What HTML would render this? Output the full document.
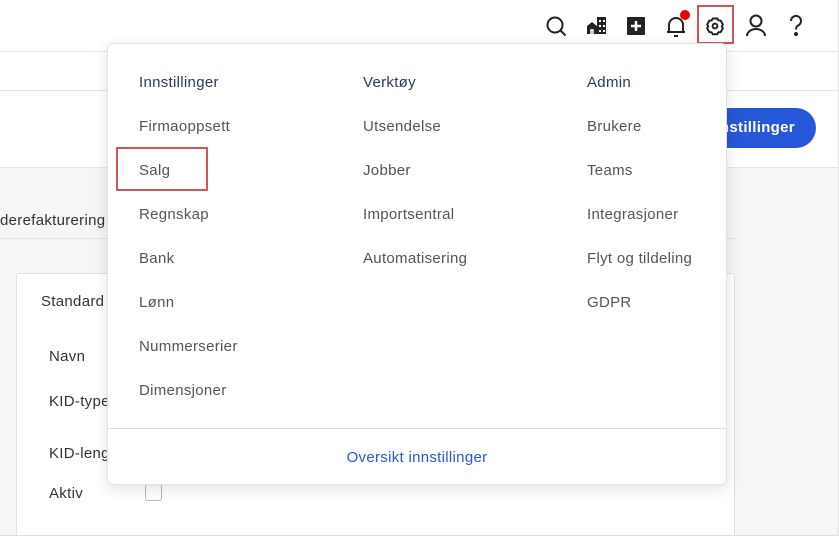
<!DOCTYPE html>
<html style="width:839px;height:536px;overflow:hidden"><head><meta charset="utf-8"><style>
*{box-sizing:border-box;margin:0;padding:0}
body{width:839px;height:536px;overflow:hidden;font-family:"Liberation Sans",sans-serif;background:#fff;position:relative;letter-spacing:0.3px}
.abs{position:absolute}
.gray{left:0;top:167px;width:839px;height:369px;background:#f5f6f7;border-top:1px solid #e3e3e3}
.txt{color:#333;font-size:15px}
.dd{left:107px;top:43px;width:620px;height:442px;background:#fff;border:1px solid #e2e2e2;border-radius:6px;box-shadow:0 4px 14px rgba(0,0,0,.12)}
.h{color:#253a6a;font-size:15px;position:absolute}
.it{color:#555;font-size:15px;position:absolute}
</style></head><body>
<div class="abs" style="left:0;top:51px;width:839px;height:1px;background:#e3e3e3"></div>
<div class="abs" style="left:0;top:90px;width:839px;height:1px;background:#e3e3e3"></div>
<div class="abs gray"></div>
<div class="abs" style="left:838px;top:0;width:1px;height:536px;background:#ddd"></div>
<div class="abs" style="left:0;top:535px;width:839px;height:1px;background:#ddd"></div>
<div class="abs" style="left:0;top:238px;width:735px;height:1px;background:#e0e0e0"></div>
<div class="abs txt" style="left:0;top:212px">derefakturering</div>
<div class="abs" style="left:16px;top:273px;width:719px;height:262px;background:#fff;border:1px solid #e0e0e0;border-bottom:none;border-radius:3px 3px 0 0"></div>
<div class="abs txt" style="left:41px;top:293px">Standard</div>
<div class="abs txt" style="left:49px;top:348px">Navn</div>
<div class="abs txt" style="left:49px;top:393px">KID-type</div>
<div class="abs txt" style="left:49px;top:445px">KID-lengde</div>
<div class="abs txt" style="left:49px;top:485px">Aktiv</div>
<div class="abs" style="left:145px;top:484px;width:17px;height:17px;border:1px solid #bbb;border-radius:3px;background:#fff"></div>
<div class="abs" style="left:690px;top:108px;width:126px;height:40px;background:#2657d8;border-radius:20px;color:#fff;font-weight:bold;font-size:15px;line-height:40px;padding-left:16px">Innstillinger</div>
<svg class="abs" style="left:540px;top:10px" width="290" height="34" viewBox="540 10 290 34" fill="none" stroke="#222" stroke-width="2">
<circle cx="555" cy="25" r="7.5"/><path d="M560.5 30.5l5 5"/>
<path d="M587 34v-8l5-4 5 4v8zM597 34V17h9v17z" fill="#222" stroke="none"/><path d="M591 34v-4h2v4" stroke="#fff" stroke-width="1.5"/><g fill="#fff" stroke="none"><rect x="599" y="20" width="2" height="2"/><rect x="603" y="20" width="2" height="2"/><rect x="599" y="25" width="2" height="2"/><rect x="603" y="25" width="2" height="2"/><rect x="599" y="30" width="2" height="2"/><rect x="603" y="30" width="2" height="2"/></g>
<rect x="627" y="17" width="18" height="18" rx="1" fill="#222" stroke="none"/><path d="M636 21v10M631 26h10" stroke="#fff" stroke-width="2.5"/>
<path d="M669 32v-7a7 7 0 0 1 14 0v7h2H667zM674 36h4"/>
<circle cx="685" cy="15" r="5" fill="#e00" stroke="none"/>
<g transform="translate(715,26) scale(0.75) translate(-715,-26)" stroke-width="2.6">
<path d="M712 17.5h6l1.5 2.6 3 .2 3 5.2-1.5 2.5 1.5 2.5-3 5.2-3 .2-1.5 2.6h-6l-1.5-2.6-3-.2-3-5.2 1.5-2.5-1.5-2.5 3-5.2 3-.2z" stroke-linejoin="round" transform="translate(0,-1.5)"/>
<circle cx="715" cy="26" r="3.2"/></g>
<circle cx="756" cy="21" r="5.5"/><path d="M747 36a9 7 0 0 1 18 0"/>
<path d="M791 21a5 5 0 1 1 7 4.5c-1.5 1-2 2-2 4"/><circle cx="796" cy="34" r="1" fill="#222"/>
</svg>
<div class="abs" style="left:697px;top:5px;width:37px;height:39px;border:2px solid #d9534f"></div>
<div class="abs dd">
<div class="h" style="left:31px;top:30px">Innstillinger</div>
<div class="it" style="left:31px;top:74px">Firmaoppsett</div>
<div class="it" style="left:31px;top:118px">Salg</div>
<div class="it" style="left:31px;top:162px">Regnskap</div>
<div class="it" style="left:31px;top:206px">Bank</div>
<div class="it" style="left:31px;top:250px">Lønn</div>
<div class="it" style="left:31px;top:294px">Nummerserier</div>
<div class="it" style="left:31px;top:338px">Dimensjoner</div>
<div class="h" style="left:255px;top:30px">Verktøy</div>
<div class="it" style="left:255px;top:74px">Utsendelse</div>
<div class="it" style="left:255px;top:118px">Jobber</div>
<div class="it" style="left:255px;top:162px">Importsentral</div>
<div class="it" style="left:255px;top:206px">Automatisering</div>
<div class="h" style="left:479px;top:30px">Admin</div>
<div class="it" style="left:479px;top:74px">Brukere</div>
<div class="it" style="left:479px;top:118px">Teams</div>
<div class="it" style="left:479px;top:162px">Integrasjoner</div>
<div class="it" style="left:479px;top:206px">Flyt og tildeling</div>
<div class="it" style="left:479px;top:250px">GDPR</div>
<div class="abs" style="left:0;top:384px;width:618px;height:1px;background:#ddd"></div>
<div class="abs" style="left:0;top:405px;width:618px;text-align:center;color:#2657d8;font-size:15px">Oversikt innstillinger</div>
</div>
<div class="abs" style="left:116px;top:147px;width:92px;height:44px;border:2px solid #d9534f"></div>
</body></html>
